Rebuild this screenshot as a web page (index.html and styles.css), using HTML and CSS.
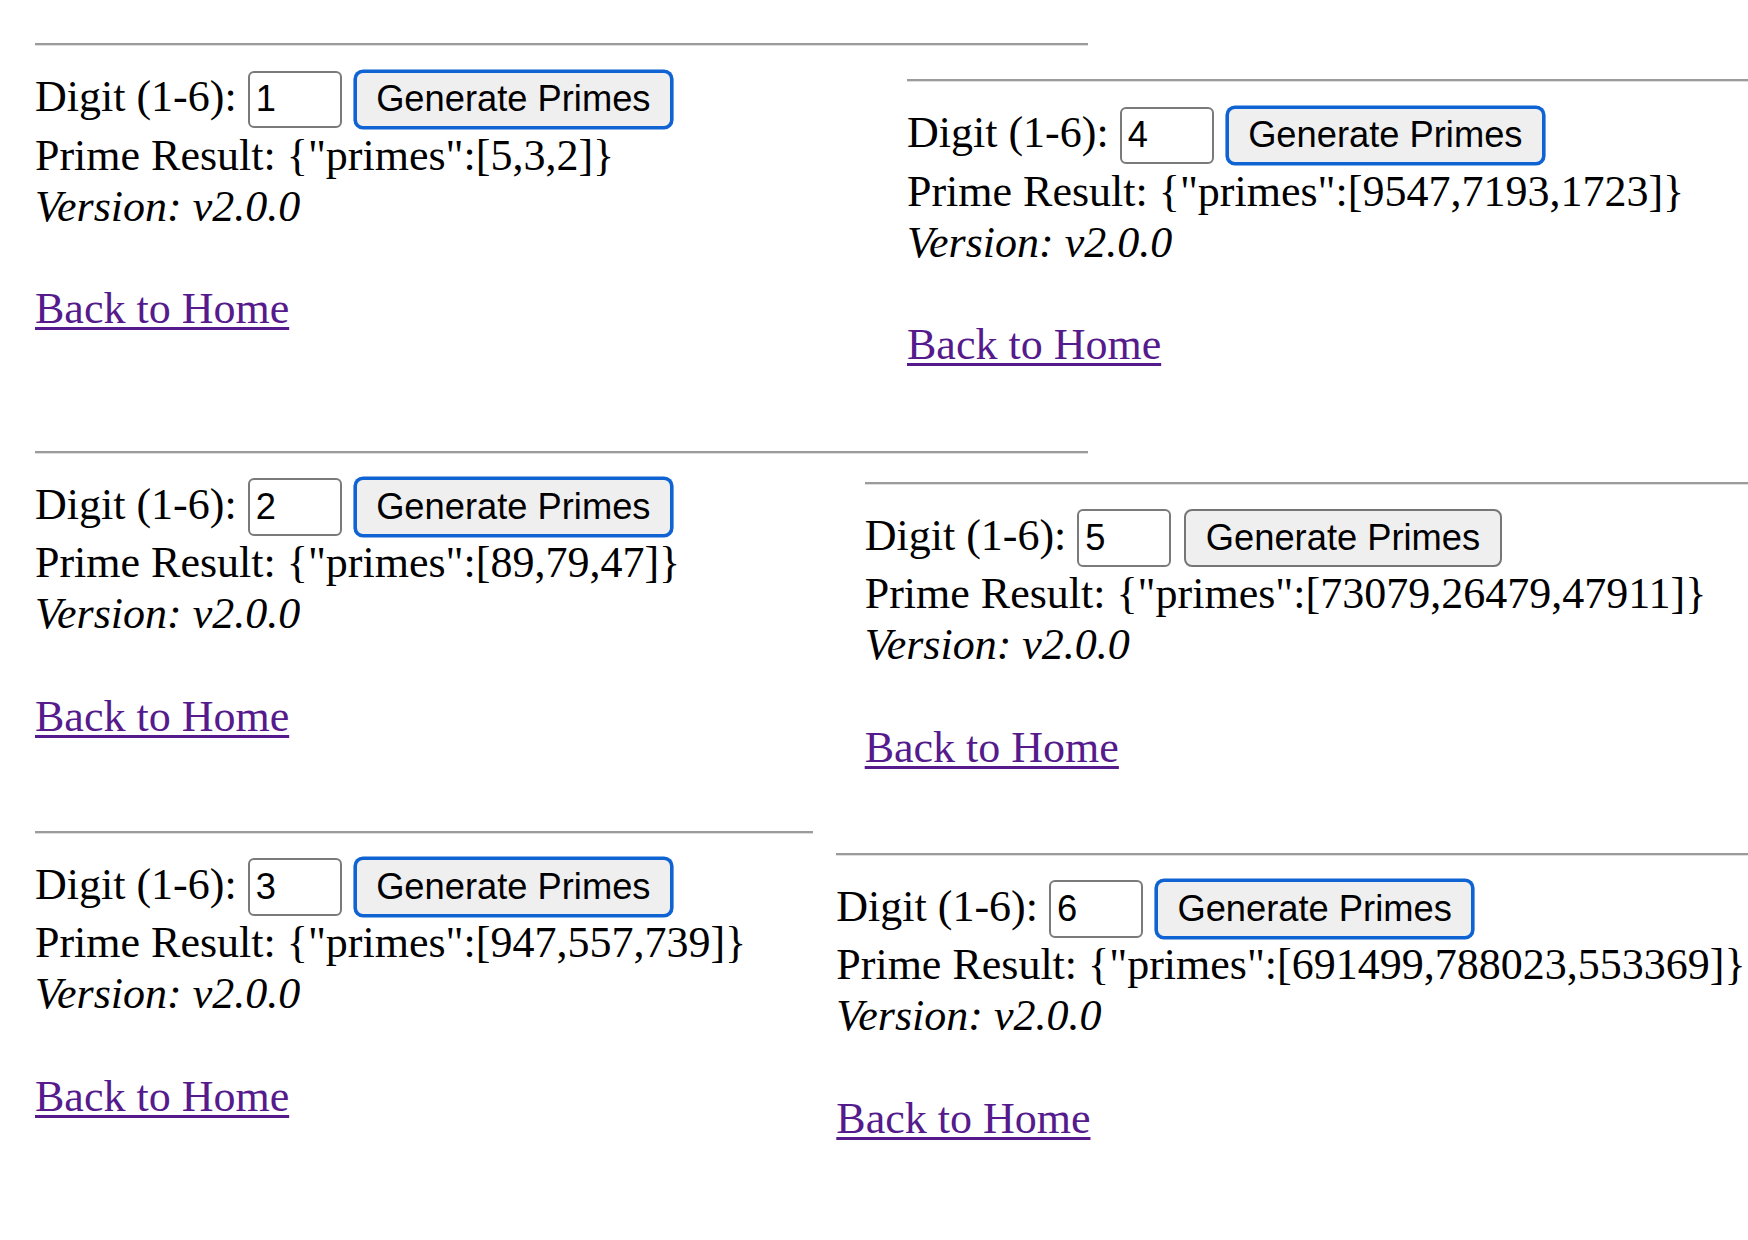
FILE: index.html
```html
<!DOCTYPE html>
<html lang="en">
<head>
<meta charset="utf-8">
<title>Prime Generator</title>
<link rel="stylesheet" href="styles.css">
</head>
<body>
<div class="collage">
  <div class="col col-left">
    <section class="panel p1">
      <hr class="rule rule-wide">
      <div class="form-row">
        <span class="label">Digit (1-6):</span>
        <input class="digit" type="text" value="1">
        <button class="gen gen-focus" type="button">Generate Primes</button>
      </div>
      <div class="result">Prime Result: {"primes":[5,3,2]}</div>
      <div class="version">Version: v2.0.0</div>
      <div class="home-row"><a class="home" href="#">Back to Home</a></div>
    </section>
    <section class="panel p2">
      <hr class="rule rule-wide">
      <div class="form-row">
        <span class="label">Digit (1-6):</span>
        <input class="digit" type="text" value="2">
        <button class="gen gen-focus" type="button">Generate Primes</button>
      </div>
      <div class="result">Prime Result: {"primes":[89,79,47]}</div>
      <div class="version">Version: v2.0.0</div>
      <div class="home-row"><a class="home" href="#">Back to Home</a></div>
    </section>
    <section class="panel p3">
      <hr class="rule rule-short">
      <div class="form-row">
        <span class="label">Digit (1-6):</span>
        <input class="digit" type="text" value="3">
        <button class="gen gen-focus" type="button">Generate Primes</button>
      </div>
      <div class="result">Prime Result: {"primes":[947,557,739]}</div>
      <div class="version">Version: v2.0.0</div>
      <div class="home-row"><a class="home" href="#">Back to Home</a></div>
    </section>
  </div>
  <div class="col col-right">
    <section class="panel p4">
      <hr class="rule">
      <div class="form-row">
        <span class="label">Digit (1-6):</span>
        <input class="digit" type="text" value="4">
        <button class="gen gen-focus" type="button">Generate Primes</button>
      </div>
      <div class="result">Prime Result: {"primes":[9547,7193,1723]}</div>
      <div class="version">Version: v2.0.0</div>
      <div class="home-row"><a class="home" href="#">Back to Home</a></div>
    </section>
    <section class="panel p5">
      <hr class="rule">
      <div class="form-row">
        <span class="label">Digit (1-6):</span>
        <input class="digit" type="text" value="5">
        <button class="gen" type="button">Generate Primes</button>
      </div>
      <div class="result">Prime Result: {"primes":[73079,26479,47911]}</div>
      <div class="version">Version: v2.0.0</div>
      <div class="home-row"><a class="home" href="#">Back to Home</a></div>
    </section>
    <section class="panel p6">
      <hr class="rule">
      <div class="form-row">
        <span class="label">Digit (1-6):</span>
        <input class="digit" type="text" value="6">
        <button class="gen gen-focus" type="button">Generate Primes</button>
      </div>
      <div class="result">Prime Result: {"primes":[691499,788023,553369]}</div>
      <div class="version">Version: v2.0.0</div>
      <div class="home-row"><a class="home" href="#">Back to Home</a></div>
    </section>
  </div>
</div>
</body>
</html>
```

FILE: styles.css
```css
* {
  box-sizing: border-box;
}

html,
body {
  margin: 0;
  padding: 0;
  background: #ffffff;
}

body {
  width: 1748px;
  height: 1240px;
  overflow: hidden;
  font-family: "Liberation Serif", "Times New Roman", serif;
  font-size: 44px;
  color: #000000;
}

.collage {
  display: flex;
  height: 100%;
}

.col {
  display: flex;
  flex-direction: column;
}

.col-left {
  flex: none;
  width: 800px;
  padding-left: 35px;
  padding-top: 43.3px;
}

.col-right {
  flex: 1;
  min-width: 0;
  overflow: hidden;
  padding-top: 79.3px;
}

.panel {
  flex: none;
  height: 290px;
  white-space: nowrap;
}

.p1 { margin-bottom: 117.4px; }
.p2 { margin-bottom: 90.3px; }
.p4 { margin-left: 107px; margin-bottom: 112.4px; }
.p5 { margin-left: 64.7px; margin-bottom: 81px; }
.p6 { margin-left: 36.3px; }

.rule {
  display: block;
  height: 0;
  margin: 0 0 24.4px;
  border: 0;
  border-top: 2.7px solid #9b9b9b;
  border-bottom: 1.3px solid #dedede;
}

.rule-wide {
  width: 1052.5px;
}

.rule-short {
  width: 777.7px;
}

.form-row {
  display: flex;
  align-items: baseline;
}

.label {
  line-height: normal;
}

.digit {
  width: 94px;
  height: 57.6px;
  margin: 0 0 0 11px;
  padding: 0 6px;
  border: 2.7px solid #7a7a7a;
  border-radius: 6px;
  background: #ffffff;
  font-family: "Liberation Sans", Arial, sans-serif;
  font-size: 36.3px;
  color: #000000;
  outline: none;
}

.gen {
  height: 57.6px;
  margin: 0 0 0 13px;
  padding: 0 19.5px;
  border: 2.7px solid #767676;
  border-radius: 8px;
  background: #efefef;
  font-family: "Liberation Sans", Arial, sans-serif;
  font-size: 36.3px;
  line-height: normal;
  color: #000000;
}

.gen-focus {
  border-color: #0f63d2;
  box-shadow: 0 0 0 1.6px #0f63d2;
}

.result {
  margin-top: 1.5px;
  line-height: normal;
}

.version {
  line-height: normal;
  font-style: italic;
}

.home-row {
  margin-top: 51.5px;
  line-height: normal;
}

.home {
  color: #551a8b;
  text-decoration: underline;
  text-decoration-thickness: 2.8px;
  text-underline-offset: 3.5px;
}
```
